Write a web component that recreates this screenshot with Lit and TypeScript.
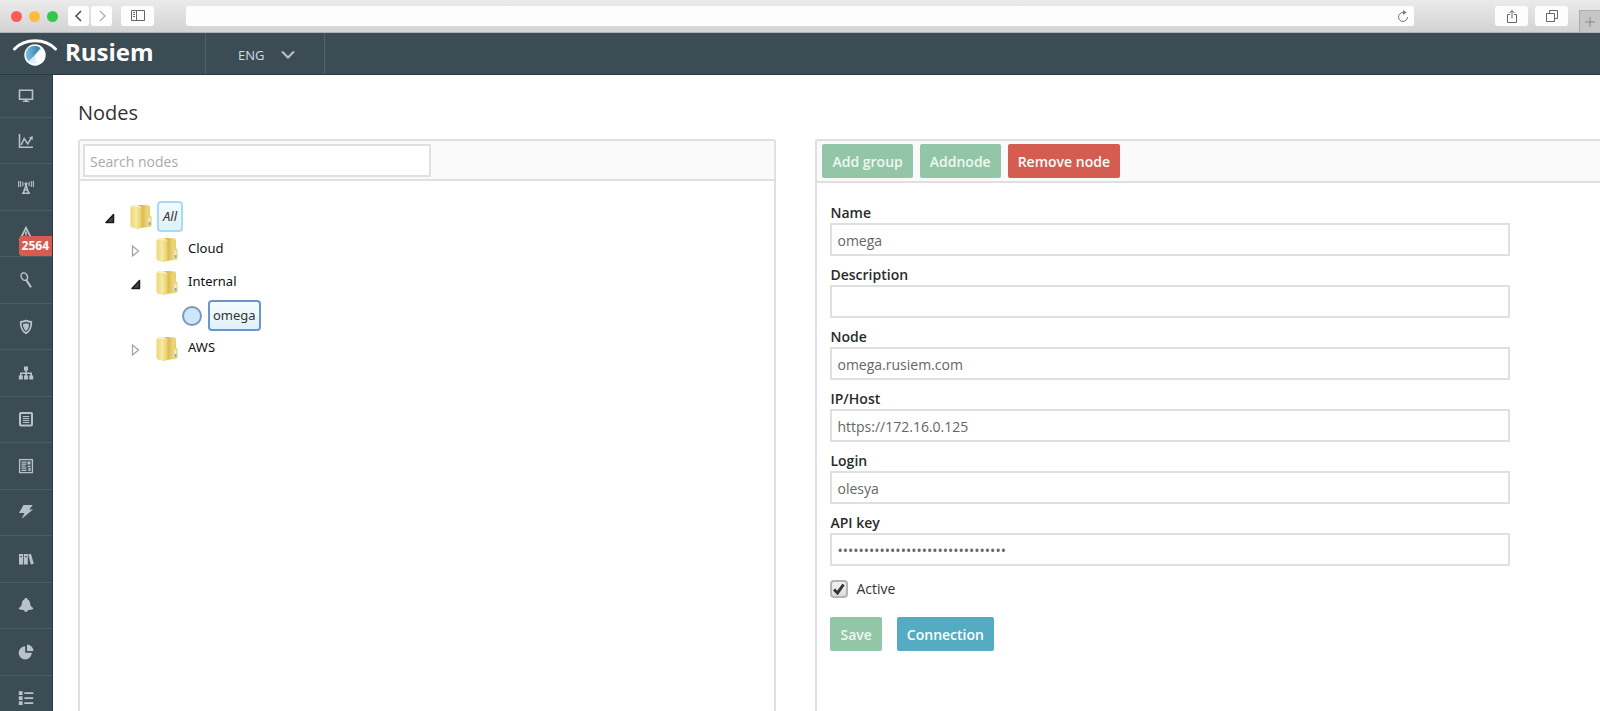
import { LitElement, html, svg, css, nothing, TemplateResult, SVGTemplateResult } from "lit";
import { customElement, property, state } from "lit/decorators.js";
import { classMap } from "lit/directives/class-map.js";

interface TreeNode {
  name: string;
  leaf?: boolean;
  open?: boolean;
  children?: TreeNode[];
}

interface Field {
  id: string;
  label: string;
  value: string;
  type: string;
}

interface NavItem {
  label: string;
  icon: SVGTemplateResult;
  badge?: string;
}

const NAV: NavItem[] = [
  {
    label: "Dashboard",
    icon: svg`<path d="M1.500 2.300h13v8.900h-13z" fill="none" stroke="currentColor" stroke-width="1.600"/><path d="M6.800 11.500h2.400v1.300h2V14H4.800v-1.200h2z"/>`,
  },
  {
    label: "Analytics",
    icon: svg`<path d="M1.500 1v13.200H15" fill="none" stroke="currentColor" stroke-width="1.600"/><path d="M3.200 12 6.200 5.500l3.500 5.300 3.600-6" fill="none" stroke="currentColor" stroke-width="1.500"/><path d="m10.800 4.800 3.800-1.800.2 4z"/>`,
  },
  {
    label: "Sources",
    icon: svg`<path d="M3 2.200C2 4 2 6 3 7.800M.9 2C0 4 0 6 .9 8M5.200 3c-.8 1.400-.8 2.600 0 4M13 2.200C14 4 14 6 13 7.800M15.100 2c.9 2 .9 4 0 6M10.800 3c.8 1.400.8 2.600 0 4" fill="none" stroke="currentColor" stroke-width="1.200"/><circle cx="8" cy="4.800" r="1.600"/><path d="m8 6-2.800 8.500M8 6l2.800 8.500M6.200 11h3.600M4 14.300h8M7 8.500h2" fill="none" stroke="currentColor" stroke-width="1.500"/>`,
  },
  {
    label: "Incidents",
    badge: "2564",
    icon: svg`<path d="M8 1.800 14 13.500H2z" fill="none" stroke="currentColor" stroke-width="1.800"/><path d="M7.200 5.500h1.600v4H7.200z"/>`,
  },
  {
    label: "Search",
    icon: svg`<ellipse cx="6.300" cy="4.600" rx="3" ry="3.900" transform="rotate(-28 6.300 4.600)" fill="none" stroke="currentColor" stroke-width="1.500"/><path d="m8.600 8.500 3.900 6" stroke="currentColor" stroke-width="2.200" stroke-linecap="round"/>`,
  },
  {
    label: "Protection",
    icon: svg`<path d="M8 1.600c2 .9 3.600 1.200 5.300 1.300.1 5.200-1.200 9-5.300 11.400C3.900 11.900 2.600 8.100 2.700 2.900 4.400 2.800 6 2.500 8 1.600z" fill="none" stroke="currentColor" stroke-width="1.700"/><path d="M8 4.200c.9.500 1.900.7 3 .8 0 3-.9 5.400-3 7-2.100-1.600-3-4-3-7 1.100-.1 2.100-.3 3-.8z"/>`,
  },
  {
    label: "Nodes",
    icon: svg`<path d="M6 1.500h4v4H6zM.800 10.500h4v4h-4zM6 10.500h4v4H6zM11.200 10.500h4v4h-4z"/><path d="M8 5v6M2.800 11V8.200h10.400V11" fill="none" stroke="currentColor" stroke-width="1.600"/>`,
  },
  {
    label: "Documents",
    icon: svg`<rect x="2" y="2" width="12" height="12.500" rx="1" fill="none" stroke="currentColor" stroke-width="2"/><path d="M4.800 5.500h6.400M4.800 7.500h6.400M4.800 9.500h6.400M4.800 11.500h6.400" stroke="currentColor" stroke-width="1.200"/>`,
  },
  {
    label: "Reports",
    icon: svg`<rect x="1.600" y="1.600" width="12.800" height="13" fill="none" stroke="currentColor" stroke-width="1.300"/><path d="M3.500 4.200h5M3.500 6.200h5M3.500 8.200h4M3.500 10.200h5M3.500 12.300h5" stroke="currentColor" stroke-width="1.200"/><path d="M9.500 3.500h3v3h-3zM9.500 7.700h3v1.500h-3zM10.500 10h2v3h-2z"/>`,
  },
  {
    label: "Events",
    icon: svg`<path d="M5.500 1h9.300l-3.600 4.500H15L3.500 15l3-6H1z"/>`,
  },
  {
    label: "Library",
    icon: svg`<path fill-rule="evenodd" d="M1 3h4v10.500H1zm1.200 2v1.200h1.600V5zM5.800 3h4v10.500h-4zM7 5v1.200h1.600V5zM10.200 3.500l2.700-.7 2.900 10-2.900.8z"/>`,
  },
  {
    label: "Notifications",
    icon: svg`<path d="M8 1c1 0 1.400.5 1.400 1.200C11.300 3 12 4.500 12.200 7c.2 2 1.200 2.800 2.600 3.800.7.700.4 1.500-.8 1.800-3.600.9-8.400.9-12 0-1.200-.3-1.500-1.100-.8-1.800C2.600 9.800 3.600 9 3.800 7 4 4.500 4.700 3 6.600 2.200 6.600 1.500 7 1 8 1zM6 13.300h4c-.3 1.200-1 1.700-2 1.700s-1.700-.5-2-1.700z"/>`,
  },
  {
    label: "Statistics",
    icon: svg`<path d="M7.200 2.200v6.600h6.600A6.600 6.600 0 1 1 7.200 2.200z"/><path d="M9 .6A6.500 6.500 0 0 1 15.400 7H9z"/>`,
  },
  {
    label: "Settings",
    icon: svg`<path d="M.800 1.300h3.800v3.600H.800zM.800 6.300h3.800v3.600H.800zM.800 11.300h3.800v3.600H.800zM6.300 2.200h9v1.800h-9zM6.300 7.200h9V9h-9zM6.300 12.200h9V14h-9z"/>`,
  },
];

const FIELDS: Field[] = [
  { id: "name", label: "Name", value: "omega", type: "text" },
  { id: "description", label: "Description", value: "", type: "text" },
  { id: "node", label: "Node", value: "omega.rusiem.com", type: "text" },
  { id: "host", label: "IP/Host", value: "https://172.16.0.125", type: "text" },
  { id: "login", label: "Login", value: "olesya", type: "text" },
  { id: "apikey", label: "API key", value: "0123456789abcdef0123456789abcdef", type: "password" },
];

/** Browser window chrome: traffic lights, history buttons, address field. */
@customElement("browser-bar")
export class BrowserBar extends LitElement {
  static styles = css`
    :host {
      display: flex;
      align-items: center;
      flex: none;
      height: 33px;
      box-sizing: border-box;
      padding-left: 11px;
      background: linear-gradient(#ebebeb, #d3d3d3);
      border-bottom: 1px solid #aeb4b8;
    }
    .lights {
      display: flex;
      gap: 6px;
      margin-right: 10px;
    }
    .light {
      width: 11px;
      height: 11px;
      border-radius: 50%;
    }
    .light + .light { margin-left: 1px; }
    .close { background: #fc5b57; }
    .min { background: #fdbc40; }
    .max { background: #34c84a; }
    .btn {
      display: flex;
      align-items: center;
      justify-content: center;
      height: 20px;
      padding: 0;
      border: 0;
      border-radius: 3px;
      background: #fdfdfd;
      color: #4c4c4c;
    }
    .small { width: 21px; margin-right: 2px; }
    .wide { width: 33px; }
    .dim { color: #b0b0b0; }
    .panel { margin-left: 7px; color: #666; }
    .address {
      display: flex;
      flex: 1;
      height: 20px;
      margin: 0 81px 0 32px;
      border-radius: 3px;
      background: #fdfdfd;
    }
    .url {
      flex: 1;
      min-width: 0;
      border: 0;
      padding: 0 8px;
      background: none;
      font: 12px "Open Sans", sans-serif;
    }
    .reload { width: 22px; color: #777; }
    .share { margin-right: 7px; color: #666; }
    .tabs { margin-right: 11px; color: #666; }
    .plus {
      align-self: flex-end;
      width: 21px;
      height: 22px;
      border-radius: 0;
      border-left: 1px solid #aaa;
      border-top: 1px solid #b0b0b0;
      background: #c6c6c6;
      color: #888;
    }
    .ico {
      fill: none;
      stroke: currentColor;
    }
  `;

  render() {
    return html`
      <div class="lights">
        <span class="light close"></span><span class="light min"></span><span class="light max"></span>
      </div>
      <button class="btn small" aria-label="Back">
        <svg class="ico" width="12" height="12" stroke-width="1.500"><path d="M8 1 3 6l5 5" /></svg>
      </button>
      <button class="btn small dim" aria-label="Forward">
        <svg class="ico" width="12" height="12" stroke-width="1.300"><path d="m4 1 5 5-5 5" /></svg>
      </button>
      <button class="btn wide panel" aria-label="Toggle side panel">
        <svg class="ico" width="14" height="12"><path d="M.5.500h13v10H.500zM5.500.500v10M2 2.500h2M2 4.500h2M2 6.500h2" /></svg>
      </button>
      <div class="address">
        <input class="url" aria-label="Address" />
        <button class="btn reload" aria-label="Reload">
          <svg class="ico" width="12" height="13"><path d="M6 2.500a4.500 4.500 0 1 0 4.500 4.500" /><path d="M6 0v5l3.500-2.500z" fill="currentColor" stroke="none" /></svg>
        </button>
      </div>
      <button class="btn wide share" aria-label="Share">
        <svg class="ico" width="12" height="15"><path d="M4 5.500H1.500v8h9v-8H8M6 9.500V1.500M3.500 4 6 1.500 8.500 4" /></svg>
      </button>
      <button class="btn wide tabs" aria-label="Show tabs">
        <svg class="ico" width="12" height="12"><path d="M.5 3.500h8v8h-8zM3.500 3.500v-3h8v8h-3" /></svg>
      </button>
      <button class="btn plus" aria-label="New tab">
        <svg class="ico" width="12" height="12"><path d="M6 1v10M1 6h10" /></svg>
      </button>
    `;
  }
}

/** Vertical icon menu. */
@customElement("side-nav")
export class SideNav extends LitElement {
  static styles = css`
    :host {
      display: block;
      overflow: hidden;
      background: #3c4c55;
      border-right: 1px solid #2b3a42;
      width: 53px;
      box-sizing: border-box;
      flex: none;
    }
    .list {
      display: grid;
      grid-template-rows: 43px repeat(13, 1fr);
      height: 647px;
      margin: 0;
      padding: 0;
      list-style: none;
    }
    .item {
      position: relative;
      border-bottom: 1px solid #4c5d66;
    }
    .link {
      display: flex;
      height: 100%;
      align-items: center;
      justify-content: center;
      color: #b8c3c9;
    }
    .ico { fill: currentColor; }
    .badge {
      position: absolute;
      right: 0;
      bottom: 0;
      padding: 0 3px;
      border-radius: 3px 0 0 3px;
      background: #d65b50;
      color: #fff;
      font: 700 12px/20px "Open Sans", sans-serif;
    }
  `;

  render() {
    return html`<nav aria-label="Main">
      <ul class="list">
        ${NAV.map(
          (n) => html`<li class="item">
            <a class="link" href="#" aria-label=${n.label}>
              <svg class="ico" width="16" height="16" viewBox="0 0 16 16">${n.icon}</svg>
              ${n.badge ? html`<span class="badge">${n.badge}</span>` : nothing}
            </a>
          </li>`
        )}
      </ul>
    </nav>`;
  }
}

/** Expandable tree of node groups. */
@customElement("node-tree")
export class NodeTree extends LitElement {
  @property() selected = "omega";
  @state() private root: TreeNode = {
    name: "All",
    open: true,
    children: [
      { name: "Cloud" },
      { name: "Internal", open: true, children: [{ name: "omega", leaf: true }] },
      { name: "AWS" },
    ],
  };

  static styles = css`
    :host {
      display: block;
      padding: 19px 25px;
      font: 13px/20px "Noto Sans", sans-serif;
      color: #111;
    }
    .level {
      margin: 0;
      padding: 0;
      list-style: none;
    }
    .level .level { padding-left: 26px; }
    .row {
      display: flex;
      align-items: center;
      height: 33px;
    }
    .twist {
      width: 25px;
      height: 20px;
      padding: 2px 0 0;
      border: 0;
      background: none;
      display: flex;
      align-items: center;
    }
    .kind { margin-right: 5px; flex: none; }
    .leaf { margin-right: 4px; }
    .name {
      box-sizing: border-box;
      height: 31px;
      padding: 0 4px 3px;
      border: 1px solid transparent;
      border-radius: 4px;
      background: none;
      font: inherit;
      color: inherit;
    }
    .top {
      padding: 0 4px 1px;
      border: 2px solid #a5dcf3;
      background: linear-gradient(#f3fafd, #dff1fa);
      font-style: italic;
      color: #333;
    }
    .picked {
      padding: 0 3px 2px;
      border: 2px solid #6a97cb;
      background: linear-gradient(#f6fbfe, #e0f1fa);
      color: #333;
    }
  `;

  private toggle(n: TreeNode) {
    n.open = !n.open;
    this.requestUpdate();
  }

  private folder() {
    return html`<svg class="kind" width="22" height="26" viewBox="0 0 22 26">
      <defs>
        <linearGradient id="front" x1="0" x2="1">
          <stop offset="0" stop-color="#ecd572" /><stop offset=".5" stop-color="#f8eaa4" /><stop offset="1" stop-color="#e8ce69" />
        </linearGradient>
        <linearGradient id="back" x1="0" x2="1">
          <stop offset="0" stop-color="#d3b14a" /><stop offset=".4" stop-color="#dcbd58" /><stop offset=".7" stop-color="#eed67b" /><stop offset="1" stop-color="#e6ca66" />
        </linearGradient>
      </defs>
      <path d="M7 2.500 9 1l9.500.300 1.500 1.700v8l1.500 2v9L19.500 23 9 24z" fill="url(#back)" />
      <path d="M.500 3 2.200 1.200l7.300.300 2 2V23l-3 2.200-6.500-1.500L.500 22z" fill="url(#front)" />
      <path d="m1.500 3.300 1-1.200 7 .400 1.300 1.500" fill="none" stroke="#fdf6cc" />
      <path d="M18.500 13.500h2v8h-2z" fill="#f3eedb" /><path d="M18.700 18h1.800v3h-1.800z" fill="#5fbcc4" />
    </svg>`;
  }

  private item(n: TreeNode, depth: number): TemplateResult {
    return html`<li>
      <div class="row">
        ${n.leaf
          ? html`<span class="twist"></span>
              <svg class="kind leaf" width="22" height="22"><circle cx="10" cy="11" r="9" fill="#cfe6fa" stroke="#7c98b8" stroke-width="2" /></svg>`
          : html`<button class="twist" aria-label=${`Toggle ${n.name}`} aria-expanded=${n.open ? "true" : "false"} @click=${() => this.toggle(n)}>
                <svg width="10" height="12">
                  ${n.open
                    ? svg`<path d="M8.500 2.500v8H1z" fill="#444" stroke="#1c1c1c" stroke-width="1.500" stroke-linejoin="round"/>`
                    : svg`<path d="M1.500 1v10l6-5z" fill="#fff" stroke="#a5a5a5" stroke-width="1.300"/>`}
                </svg>
              </button>
              ${this.folder()}`}
        <button
          class=${classMap({ name: true, top: depth === 0, picked: this.selected === n.name })}
          @click=${() => (this.selected = n.name)}
        >${n.name}</button>
      </div>
      ${n.open && n.children ? html`<ul class="level">${n.children.map((c) => this.item(c, depth + 1))}</ul>` : nothing}
    </li>`;
  }

  render() {
    return html`<ul class="level">${this.item(this.root, 0)}</ul>`;
  }
}

@customElement("app-root")
export class AppRoot extends LitElement {
  static styles = css`
    :host {
      display: flex;
      flex-direction: column;
      height: 100vh;
      overflow: hidden;
      background: #fff;
      color: #333;
      font: 14px/20px "Open Sans", sans-serif;
    }
    .header {
      display: flex;
      flex: none;
      height: 42px;
      box-sizing: border-box;
      background: #3c4c55;
      border-bottom: 1px solid #2b3a42;
    }
    .brand {
      display: flex;
      align-items: center;
      gap: 6px;
      width: 206px;
      box-sizing: border-box;
      padding: 0 0 4px 12px;
      border-right: 1px solid #51626b;
      color: #fff;
      font-size: 24px;
      line-height: 32px;
      font-weight: 700;
      text-decoration: none;
    }
    .lang {
      display: grid;
      align-items: center;
      padding: 2px 29px 0 32px;
      border-right: 1px solid #51626b;
      color: #d5dce0;
    }
    .pick {
      grid-area: 1 / 1;
      appearance: none;
      width: 57px;
      padding: 0;
      border: 0;
      background: none;
      color: inherit;
      font: 13px/20px "Open Sans", sans-serif;
    }
    .chev {
      grid-area: 1 / 1;
      justify-self: end;
      pointer-events: none;
      fill: none;
      stroke: #b8c3c9;
      stroke-width: 2;
    }
    .body {
      display: flex;
      flex: 1;
      min-height: 0;
    }
    .main {
      display: flex;
      flex-direction: column;
      flex: 1;
      min-width: 0;
      padding: 24px 0 0 25px;
    }
    .title {
      margin: 0 0 12px;
      font-size: 20px;
      line-height: 28px;
      font-weight: 400;
    }
    .cols {
      display: grid;
      grid-template-columns: 698fr 784fr;
      column-gap: 39px;
      flex: 1;
      min-height: 0;
    }
    .panel {
      border: 2px solid #e0e0e0;
      border-bottom: 0;
      border-radius: 3px 3px 0 0;
    }
    .details { border-right: 0; border-top-right-radius: 0; }
    .bar {
      display: flex;
      gap: 7px;
      padding: 3px 3px 2px;
      background: #fafafa;
      border-bottom: 2px solid #e0e0e0;
    }
    .tools { padding: 3px 5px; }
    .input {
      box-sizing: border-box;
      width: 100%;
      height: 33px;
      padding: 2px 5px 0;
      border: 2px solid #e0e0e0;
      background: #fff;
      color: #666;
      font: 14px/20px "Open Sans", sans-serif;
    }
    .search { width: 348px; }
    .input::placeholder { color: #aaa; opacity: 1; }
    .btn {
      height: 34px;
      padding: 2px 10px 0;
      border: 0;
      border-radius: 2px;
      color: #fff;
      font: 600 14px/20px "Open Sans", sans-serif;
    }
    .green { background: #93c6a6; color: #eef8f1; }
    .red { background: #d45c50; }
    .blue { background: #54acc2; }
    .form {
      display: grid;
      gap: 9px;
      padding: 20px 90px 0 13px;
    }
    .label {
      display: block;
      font-weight: 600;
      color: #2b2b2b;
    }
    .check {
      display: flex;
      align-items: center;
      gap: 8px;
      padding-top: 3px;
      line-height: 22px;
    }
    .box {
      display: grid;
      place-items: center;
    }
    .tick {
      grid-area: 1 / 1;
      appearance: none;
      width: 18px;
      height: 18px;
      margin: 0;
      border: 2px solid #b4b4b4;
      border-radius: 4px;
      background: linear-gradient(#f2f2f2, #dcdcdc);
    }
    .mark {
      grid-area: 1 / 1;
      pointer-events: none;
      fill: none;
      stroke: #333;
      stroke-width: 3;
      visibility: hidden;
    }
    .tick:checked + .mark { visibility: visible; }
    .actions {
      display: flex;
      gap: 15px;
      padding-top: 8px;
    }
  `;

  private logo() {
    return html`<svg width="47" height="30" viewBox="0 0 47 30" aria-hidden="true">
      <defs>
        <linearGradient id="iris" x1="0" y1="0" x2="1" y2="0">
          <stop offset="0" stop-color="#79c0e2" /><stop offset="1" stop-color="#2f7ba8" />
        </linearGradient>
        <linearGradient id="lens" x1="0" y1="0" x2="1" y2="1">
          <stop offset="0" stop-color="#8cc8e6" /><stop offset=".6" stop-color="#d8edf8" /><stop offset="1" stop-color="#fff" />
        </linearGradient>
      </defs>
      <path d="M2.500 12C13 1 33 1 43.500 12" fill="none" stroke="#fff" stroke-width="3" stroke-linecap="round" />
      <circle cx="23" cy="18" r="10.700" fill="#fff" />
      <circle cx="23" cy="18" r="8.800" fill="url(#lens)" />
      <path d="m23 18-6.500 6A8.800 8.800 0 0 1 28.500 11z" fill="url(#iris)" />
      <path d="m23 18 7-6.500a9 9 0 0 1-5 15.200z" fill="#fff" />
    </svg>`;
  }

  render() {
    return html`
      <browser-bar></browser-bar>
      <header class="header">
        <a class="brand" href="#">${this.logo()}<span>Rusiem</span></a>
        <div class="lang">
          <select class="pick" aria-label="Language">
            <option>ENG</option>
            <option>RUS</option>
          </select>
          <svg class="chev" width="14" height="10"><path d="m1 1.500 6 6 6-6" /></svg>
        </div>
      </header>
      <div class="body">
        <side-nav></side-nav>
        <main class="main">
          <h1 class="title">Nodes</h1>
          <div class="cols">
            <section class="panel" aria-label="Node tree">
              <div class="bar">
                <input class="input search" type="text" placeholder="Search nodes" aria-label="Search nodes" />
              </div>
              <node-tree></node-tree>
            </section>
            <section class="panel details" aria-label="Node details">
              <div class="bar tools">
                <button class="btn green">Add group</button>
                <button class="btn green">Addnode</button>
                <button class="btn red">Remove node</button>
              </div>
              <form class="form" @submit=${(e: Event) => e.preventDefault()}>
                ${FIELDS.map(
                  (f) => html`<div>
                    <label class="label" for=${f.id}>${f.label}</label>
                    <input class="input" id=${f.id} type=${f.type} .value=${f.value} autocomplete="off" />
                  </div>`
                )}
                <div class="check">
                  <span class="box">
                    <input class="tick" id="active" type="checkbox" checked />
                    <svg class="mark" width="12" height="12"><path d="m1 6.500 3.500 3.500L10.500 1.500" /></svg>
                  </span>
                  <label for="active">Active</label>
                </div>
                <div class="actions">
                  <button class="btn green" type="submit">Save</button>
                  <button class="btn blue" type="button">Connection</button>
                </div>
              </form>
            </section>
          </div>
        </main>
      </div>
    `;
  }
}
